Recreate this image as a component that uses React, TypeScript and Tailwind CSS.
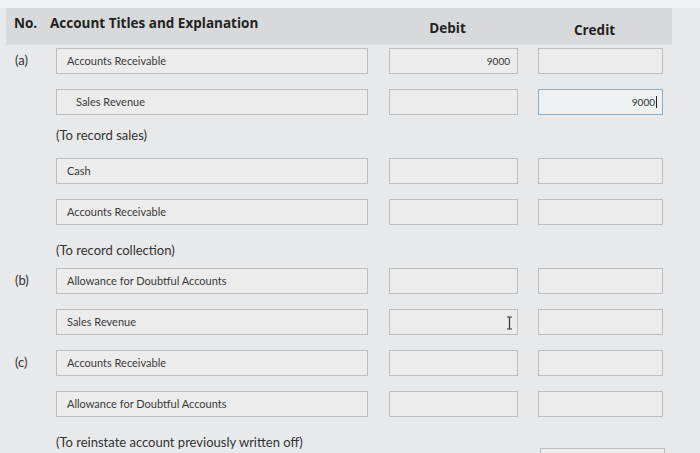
import React from "react";

type Entry = {
  label?: string;
  account: string;
  indent?: boolean;
  debit?: string;
  credit?: string;
  focused?: boolean;
  cursor?: boolean;
};

type Block = { entries: Entry[]; note: string };

const blocks: Block[] = [
  {
    entries: [
      { label: "(a)", account: "Accounts Receivable", debit: "9000" },
      { account: "Sales Revenue", indent: true, credit: "9000", focused: true },
    ],
    note: "(To record sales)",
  },
  {
    entries: [{ account: "Cash" }, { account: "Accounts Receivable" }],
    note: "(To record collection)",
  },
  {
    entries: [
      { label: "(b)", account: "Allowance for Doubtful Accounts" },
      { account: "Sales Revenue", cursor: true },
      { label: "(c)", account: "Accounts Receivable" },
      { account: "Allowance for Doubtful Accounts" },
    ],
    note: "(To reinstate account previously written off)",
  },
];

const boxBase = "h-[26px] border bg-[#ececec] flex items-center";

function IBeam() {
  return (
    <svg
      className="absolute right-[4px] top-[6px]"
      width="7"
      height="14"
      viewBox="0 0 7 14"
      fill="none"
      stroke="#333"
      strokeWidth="1.2"
    >
      <path d="M1 1h2.5M3.5 1h2.5M3.5 1v12M1 13h2.5M3.5 13h2.5" />
    </svg>
  );
}

function Row({ e }: { e: Entry }) {
  return (
    <div className="flex items-center h-[26px]">
      <div className="w-[50px] pl-[9px] text-[13px] text-[#333]">{e.label}</div>
      <div className={`${boxBase} w-[312px] border-[#bdbdbd] ${e.indent ? "pl-[19px]" : "pl-[10px]"}`}>
        <span className="text-[11px] text-[#3a3a3a]">{e.account}</span>
      </div>
      <div className={`${boxBase} relative ml-[21px] w-[129px] border-[#bdbdbd] justify-end pr-[7px]`}>
        <span className="text-[10px] text-[#333]">{e.debit}</span>
        {e.cursor && <IBeam />}
      </div>
      <div
        className={`${boxBase} ml-[20px] w-[125px] justify-end pr-[5px] ${
          e.focused ? "border-[#8eaec6] bg-[#eef0f2]" : "border-[#bdbdbd]"
        }`}
      >
        <span className="text-[10px] text-[#333]">{e.credit}</span>
        {e.focused && <span className="ml-[1px] w-px h-[12px] bg-[#222]" />}
      </div>
    </div>
  );
}

export default function App() {
  return (
    <div
      className="w-[700px] h-[453px] overflow-hidden bg-[#e8e9ea] text-[#333]"
      style={{ fontFamily: "Lato, 'Open Sans', sans-serif" }}
    >
      <div className="h-[8px] bg-[#f1f2f3]" />

      {/* HEADER */}
      <div
        className="ml-[6px] w-[666px] h-[37px] bg-[#d8d9da] flex items-start pt-[5px] font-bold text-[#222] text-[13.5px]"
        style={{ fontFamily: "'Open Sans', sans-serif" }}
      >
        <span className="w-[44px] pl-[8px]">No.</span>
        <span className="w-[333px]">Account Titles and Explanation</span>
        <span className="w-[129px] text-center pt-[5px]">Debit</span>
        <span className="ml-[20px] w-[125px] text-center pt-[7px]">Credit</span>
      </div>

      {/* ENTRIES */}
      <div className="pl-[6px] pt-[3px]">
        {blocks.map((b, i) => (
          <div key={i}>
            <div className="flex flex-col gap-[15px]">
              {b.entries.map((e, j) => (
                <Row key={j} e={e} />
              ))}
            </div>
            <div
              className={`flex items-start ${i === 0 ? "mt-[10px] mb-[13px]" : "mt-[15px] mb-[8px]"}`}
            >
              <div className="pl-[50px] text-[13px] text-[#333] h-[20px] leading-[20px]">{b.note}</div>
              {i === blocks.length - 1 && (
                <div className="ml-auto mr-[35px] mt-[16px] w-[125px] h-[26px] border border-[#bdbdbd] bg-[#ececec]" />
              )}
            </div>
          </div>
        ))}
      </div>
    </div>
  );
}
